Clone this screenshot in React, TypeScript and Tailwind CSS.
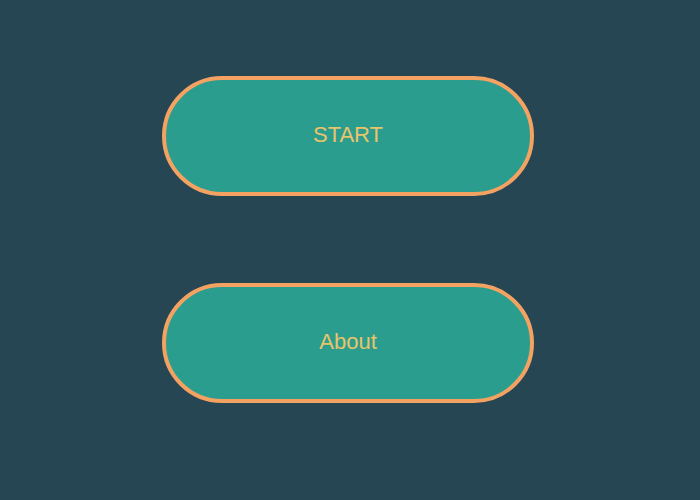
export default function App() {
  return (
    <div className="min-h-screen h-[500px] bg-[#264653] pt-[76px] pl-[162px] flex flex-col gap-[87px] font-['Liberation_Sans',Arial,sans-serif]">
      {["START", "About"].map((label) => (
        <button
          key={label}
          className="w-[372px] h-[120px] rounded-full border-4 border-[#f4a261] bg-[#2a9d8f] text-[#e9c46a] text-[22px] flex items-center justify-center pb-1"
        >
          {label}
        </button>
      ))}
    </div>
  )
}
